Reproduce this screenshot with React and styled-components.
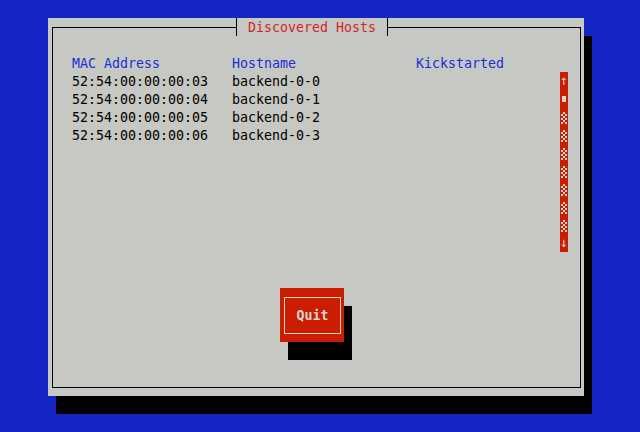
import React from "react";
import styled, { createGlobalStyle } from "styled-components";

const C = {
  blue: "#1425c4",
  gray: "#c6c8c4",
  red: "#cc1d00",
  head: "#1b2ed2",
  title: "#d4232a",
  light: "#d9d6d4",
};

const Global = createGlobalStyle`
  html, body { margin: 0; padding: 0; }
  body {
    width: 640px; height: 432px; overflow: hidden;
    background: ${C.blue};
    font-family: "DejaVu Sans Mono", "Liberation Mono", monospace;
    font-size: 13.29px;
  }
`;

const Screen = styled.div`
  box-sizing: border-box;
  width: 640px;
  height: 432px;
  padding: 18px 0 0 48px;
`;

const Dialog = styled.div`
  box-sizing: border-box;
  width: 536px;
  height: 378px;
  background: ${C.gray};
  box-shadow: 8px 18px 0 #000;
  padding: 9px 3px 8px 4px;
  display: flex;
`;

const Frame = styled.div`
  position: relative;
  flex: 1;
  border: 1px solid #000;
  display: flex;
  flex-direction: column;
  padding: 26px 0 0 19px;
`;

const Title = styled.div`
  position: absolute;
  top: -10px;
  left: 183px;
  height: 18px;
  line-height: 19px;
  padding: 0 11px;
  border-left: 1px solid #000;
  border-right: 1px solid #000;
  background: ${C.gray};
  color: ${C.title};
  white-space: pre;
`;

const Row = styled.div`
  display: grid;
  grid-template-columns: 160px 184px 1fr;
  height: 18px;
  line-height: 19px;
  color: ${(p) => (p.$head ? C.head : "#000")};
  white-space: pre;
`;

const ListArea = styled.div`
  display: flex;
  height: 180px;
`;

const ListBox = styled.div`
  width: 488px;
  display: flex;
  flex-direction: column;
`;

const Scrollbar = styled.div`
  width: 8px;
  background: ${C.red};
  display: flex;
  flex-direction: column;
`;

const ScrollCell = styled.div`
  height: 18px;
  line-height: 18px;
  display: flex;
  justify-content: center;
  align-items: ${(p) => p.$align || "center"};
  color: ${C.light};
  overflow: hidden;
`;

const Thumb = styled.span`
  width: 4px;
  height: 6px;
  background: ${C.light};
`;

const Shade = styled.span`
  width: 6px;
  height: 12px;
  margin: 4px 1px 0 0;
  background-image: repeating-conic-gradient(
    ${C.light} 0 25%,
    transparent 0 50%
  );
  background-size: 4px 4px;
`;

const ButtonRow = styled.div`
  margin-top: 36px;
  padding-left: 208px;
  display: flex;
`;

const Button = styled.div`
  box-sizing: border-box;
  width: 64px;
  height: 54px;
  background: ${C.red};
  box-shadow: 8px 18px 0 #000;
  padding: 9px 3px 8px 4px;
  display: flex;
`;

const ButtonInner = styled.div`
  flex: 1;
  border: 1px solid ${C.light};
  display: flex;
  align-items: center;
  justify-content: center;
  color: ${C.light};
  font-weight: bold;
  line-height: 18px;
`;

const hosts = [
  ["52:54:00:00:00:03", "backend-0-0"],
  ["52:54:00:00:00:04", "backend-0-1"],
  ["52:54:00:00:00:05", "backend-0-2"],
  ["52:54:00:00:00:06", "backend-0-3"],
];

export default function App() {
  return (
    <>
      <Global />
      <Screen>
        <Dialog>
          <Frame>
            <Title>Discovered Hosts</Title>
            <Row $head>
              <span>MAC Address</span>
              <span>Hostname</span>
              <span>Kickstarted</span>
            </Row>
            <ListArea>
              <ListBox>
                {hosts.map(([mac, host]) => (
                  <Row key={mac}>
                    <span>{mac}</span>
                    <span>{host}</span>
                    <span></span>
                  </Row>
                ))}
              </ListBox>
              <Scrollbar>
                <ScrollCell>↑</ScrollCell>
                <ScrollCell>
                  <Thumb />
                </ScrollCell>
                {Array.from({ length: 7 }).map((_, i) => (
                  <ScrollCell key={i} $align="flex-start">
                    <Shade />
                  </ScrollCell>
                ))}
                <ScrollCell>↓</ScrollCell>
              </Scrollbar>
            </ListArea>
            <ButtonRow>
              <Button>
                <ButtonInner>Quit</ButtonInner>
              </Button>
            </ButtonRow>
          </Frame>
        </Dialog>
      </Screen>
    </>
  );
}
